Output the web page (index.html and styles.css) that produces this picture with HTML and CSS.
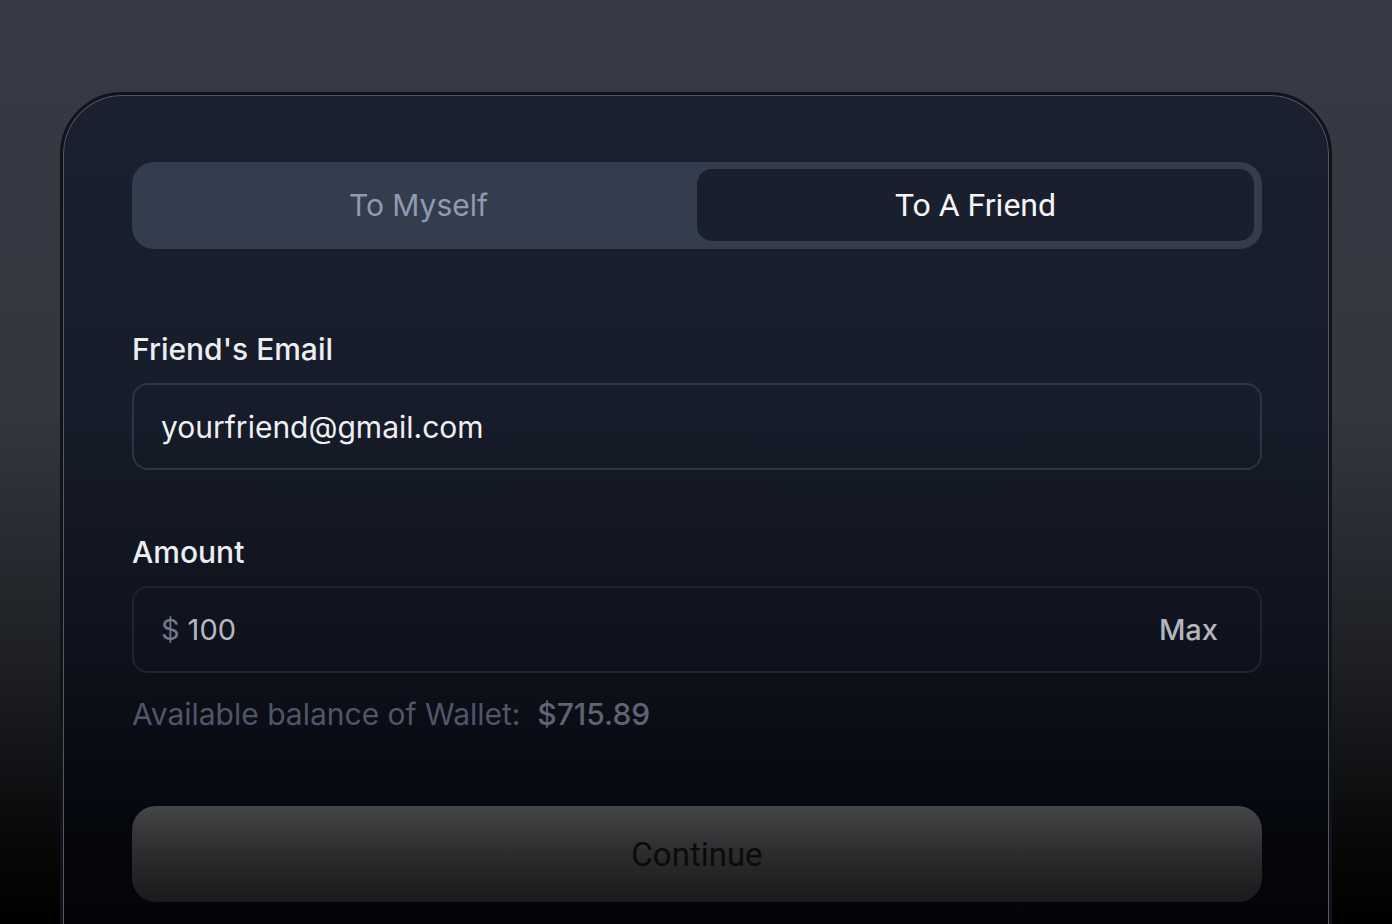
FILE: index.html
```html
<html>
<head>
<link rel="stylesheet" href="styles.css">
</head>
<body>
<div class="card">
  <div class="toggle">
    <div class="tab">To Myself</div>
    <div class="tab active">To A Friend</div>
  </div>

  <div class="field first">
    <div class="label">Friend's Email</div>
    <div class="input">yourfriend@gmail.com</div>
  </div>

  <div class="field">
    <div class="label">Amount</div>
    <div class="input amount">
      <span class="currency">$</span><span class="value">100</span>
      <span class="max">Max</span>
    </div>
    <div class="balance">Available balance of Wallet:&nbsp; <span class="balance-num">$715.89</span></div>
  </div>

  <button class="continue">Continue</button>
</div>
</body>
</html>
```
FILE: styles.css
```css
html, body {
	margin: 0;
	height: 100%;
	overflow: hidden;
}
body {
	font-family: Inter, "Noto Sans", sans-serif;
	background: linear-gradient(180deg, #363a44 0%, #32363f 45%, #1d1f23 72%, #070708 92%, #000 100%);
	padding-top: 92px;
	box-sizing: border-box;
}
.card {
	width: 1272px;
	height: 900px;
	margin: 0 auto;
	box-sizing: border-box;
	padding: 67px 67px 0 69px;
	border-radius: 62px;
	border: 3px solid #121316;
	box-shadow: inset 0 0 0 1px #525869;
	background: linear-gradient(180deg, #1b2030 0%, #171c2a 35%, #0e121c 62%, #05070d 82%, #020305 100%);
}
.toggle {
	display: grid;
	grid-template-columns: 1fr 1fr;
	padding: 7px 8px 8px 8px;
	height: 87px;
	box-sizing: border-box;
	background: #333d4e;
	border-radius: 22px;
}
.tab {
	display: flex;
	align-items: center;
	justify-content: center;
	font-size: 30px;
	color: #8e9bb1;
}
.tab.active {
	background: #1a1f2d;
	border-radius: 15px;
	color: #f4f5f7;
	font-family: Roboto, sans-serif;
	font-size: 32px;
}
.field.first {
	margin-top: 83px;
}
.field {
	margin-top: 65px;
}
.label {
	font-size: 30px;
	line-height: 34px;
	color: #eceef1;
	font-weight: 500;
	margin-bottom: 17px;
}
.input {
	height: 87px;
	box-sizing: border-box;
	border: 2px solid #2e3443;
	border-radius: 16px;
	display: flex;
	align-items: center;
	padding: 0 27px;
	font-size: 30px;
	color: #eef0f3;
}
.input.amount {
	border-color: #1f2430;
	padding-right: 42px;
}
.currency {
	color: #737a87;
	margin-right: 8px;
	font-size: 29px;
}
.value {
	color: #b5b9c0;
	font-size: 29px;
	flex: 1;
}
.max {
	color: #b2b6bc;
	font-size: 29px;
	font-weight: 500;
}
.balance {
	margin-top: 24px;
	font-size: 30px;
	line-height: 34px;
	color: #50566a;
}
.balance-num {
	color: #5e6473;
	font-weight: 500;
}
.continue {
	display: block;
	width: 100%;
	margin-top: 75px;
	height: 96px;
	border: none;
	border-radius: 24px;
	background: linear-gradient(180deg, #444647 0%, #2b2c2d 50%, #1a1a1b 100%);
	font-family: Roboto, sans-serif;
	font-size: 33px;
	color: #0b0b0c;
}
```
